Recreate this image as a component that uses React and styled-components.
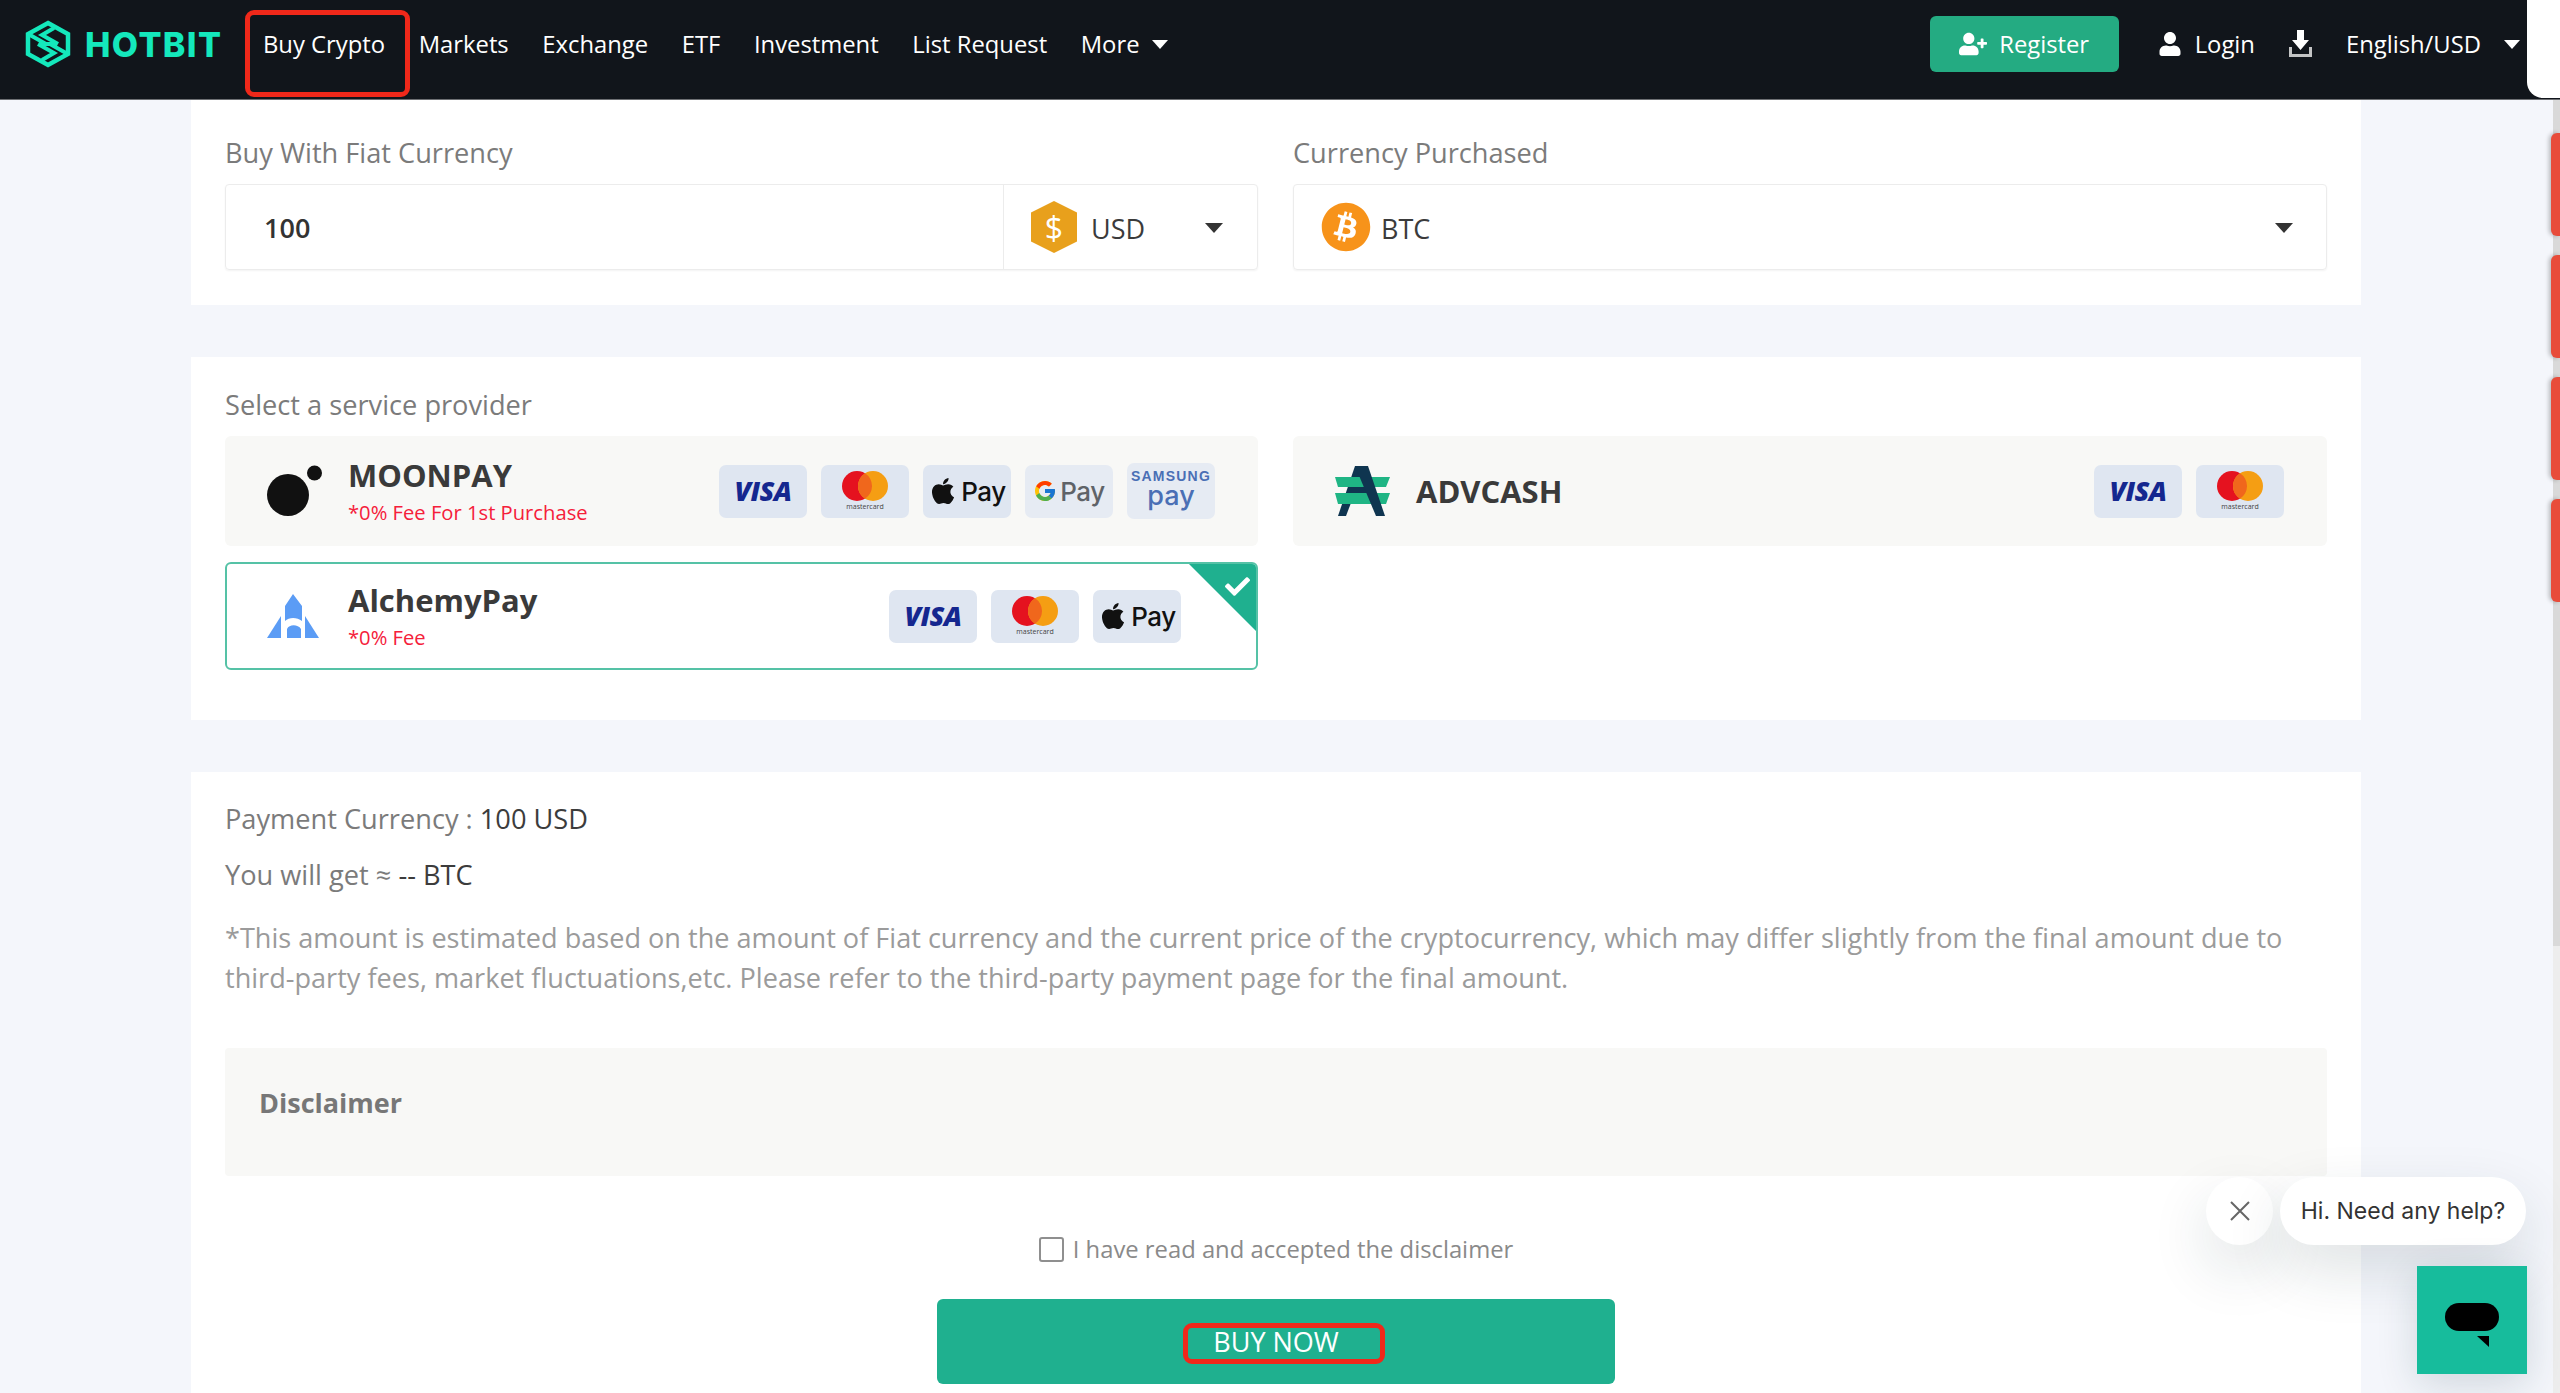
import React from 'react'
import styled, { createGlobalStyle } from 'styled-components'
import { FaApple, FaUser, FaUserPlus, FaCheck, FaBitcoin } from 'react-icons/fa'
import { FcGoogle } from 'react-icons/fc'

const GlobalStyle = createGlobalStyle`
  html, body { margin: 0; padding: 0; height: 100%; overflow: hidden; }
  body { background: #f4f6fb; font-family: "Open Sans", "Liberation Sans", sans-serif; }
  * { box-sizing: border-box; }
`

const Screen = styled.div`
  height: 100vh;
  display: flex;
  flex-direction: column;
  overflow: hidden;
  position: relative;
`

const Header = styled.header`
  height: 100px;
  flex-shrink: 0;
  background: #11151b;
  border-bottom: 1px solid #6d6f73;
  display: flex;
  align-items: center;
  padding: 0 40px 11px 24px;
  color: #fff;
  font-size: 23.8px;
`

const Logo = styled.div`
  display: flex;
  align-items: center;
  gap: 13px;
  width: 239px;
  color: #14e8bc;
  font-family: "Inter", "Liberation Sans", sans-serif;
  font-weight: 800;
  font-size: 34px;
  letter-spacing: 1.4px;
`

const Nav = styled.nav`
  display: flex;
  align-items: center;
  gap: 33.6px;
`

const NavItem = styled.span`
  position: relative;
  display: inline-flex;
  align-items: center;
  gap: 12px;
  white-space: nowrap;
`

const Annotation = styled.i`
  position: absolute;
  border: 5px solid #f0281a;
  border-radius: 9px;
  pointer-events: none;
`

const NavAnnotation = styled(Annotation)`
  left: -18px;
  right: -25px;
  top: -18px;
  bottom: -37px;
`

const Caret = styled.i`
  display: inline-block;
  width: 0;
  height: 0;
  border-left: ${(p) => p.$size || 8}px solid transparent;
  border-right: ${(p) => p.$size || 8}px solid transparent;
  border-top: ${(p) => (p.$size || 8) + 1}px solid ${(p) => p.$color || '#fff'};
`

const HeaderRight = styled.div`
  margin-left: auto;
  display: flex;
  align-items: center;
`

const RegisterButton = styled.div`
  width: 189px;
  height: 56px;
  border-radius: 6px;
  background: #24ab82;
  display: flex;
  align-items: center;
  justify-content: center;
  gap: 12px;
  margin-right: 39px;
  svg { font-size: 28px; }
`

const HeaderLink = styled.span`
  display: inline-flex;
  align-items: center;
  gap: ${(p) => p.$gap || 13}px;
  white-space: nowrap;
  margin-right: ${(p) => p.$mr || 0}px;
  svg { font-size: 24px; }
`

const CornerTab = styled.div`
  position: absolute;
  top: 0;
  right: 0;
  width: 33px;
  height: 98px;
  background: #fff;
  border-bottom-left-radius: 16px;
`

const Body = styled.div`
  flex: 1;
  min-height: 0;
  display: flex;
`

const Content = styled.main`
  flex: 1;
  min-width: 0;
  padding: 0 192px 0 191px;
  display: flex;
  flex-direction: column;
  gap: 52px;
`

const ScrollTrack = styled.div`
  width: 7px;
  flex-shrink: 0;
  background: #ededed;
`

const ScrollThumb = styled.div`
  height: 846px;
  background: #d9d9d9;
`

const SideTabs = styled.div`
  position: absolute;
  right: 0;
  top: 133px;
  display: flex;
  flex-direction: column;
  gap: 19px;
`

const SideTab = styled.div`
  width: 9px;
  height: 103px;
  background: #e84c3a;
  border-radius: 6px 0 0 6px;
  box-shadow: -2px 0 4px rgba(0, 0, 0, 0.25);
`

const Panel = styled.section`
  background: #fff;
  flex-shrink: 0;
  padding: ${(p) => p.$pad};
`

const TwoColumns = styled.div`
  display: grid;
  grid-template-columns: 1033px 1034px;
  column-gap: 35px;
  align-items: start;
`

const Label = styled.div`
  font-size: 27.2px;
  line-height: 36px;
  color: #7b7b7b;
  margin-bottom: 13px;
`

const Field = styled.div`
  height: 86px;
  border: 1px solid #ececec;
  border-radius: 4px;
  box-shadow: 0 1px 2px rgba(0, 0, 0, 0.05);
  display: flex;
  align-items: center;
`

const AmountValue = styled.div`
  flex: 1;
  align-self: stretch;
  display: flex;
  align-items: center;
  padding-left: 38px;
  font-size: 27px;
  font-weight: 600;
  color: #333;
  border-right: 1px solid #ececec;
`

const CoinSelect = styled.div`
  width: ${(p) => (p.$wide ? '100%' : '253px')};
  display: flex;
  align-items: center;
  padding: 0 ${(p) => (p.$wide ? 33 : 34)}px 0 27px;
  gap: ${(p) => (p.$wide ? 10 : 14)}px;
  font-size: 27px;
  color: #3b3b3b;
  span { margin-top: 3px; }
  i { margin-left: auto; margin-top: 2px; }
`

const DollarCoin = styled.div`
  width: 46px;
  height: 52px;
  clip-path: polygon(50% 0, 100% 22%, 100% 78%, 50% 100%, 0 78%, 0 22%);
  background: #e8a01c;
  color: #fff;
  display: flex;
  align-items: center;
  justify-content: center;
  font-size: 32px;
`

const BitcoinCoin = styled.div`
  height: 50px;
  color: #f7931a;
  svg { display: block; font-size: 50px; }
`

const CardStack = styled.div`
  display: flex;
  flex-direction: column;
  gap: 16px;
`

const ProviderCard = styled.div`
  position: relative;
  height: ${(p) => (p.$selected ? 108 : 110)}px;
  border-radius: 6px;
  overflow: hidden;
  background: ${(p) => (p.$selected ? '#fff' : '#f8f8f6')};
  border: ${(p) => (p.$selected ? '2px solid #55c2a6' : 'none')};
  padding: 0 ${(p) => (p.$selected ? 75 : 43)}px 0 ${(p) => (p.$selected ? 40 : 42)}px;
  display: flex;
  align-items: center;
`

const IconSlot = styled.div`
  width: 81px;
  flex-shrink: 0;
  svg { display: block; }
`

const ProviderInfo = styled.div`
  display: flex;
  flex-direction: column;
  margin-top: -1px;
`

const ProviderName = styled.div`
  font-size: ${(p) => p.$size || 31}px;
  line-height: 40px;
  font-weight: 700;
  color: #3a3a3a;
`

const FeeNote = styled.div`
  font-size: 20.2px;
  line-height: 30px;
  color: #f5203a;
  margin-top: 2px;
`

const Chips = styled.div`
  margin-left: auto;
  display: flex;
  align-items: center;
  gap: 14px;
`

const Chip = styled.div`
  width: 88px;
  height: ${(p) => (p.$tall ? 56 : 53)}px;
  border-radius: 7px;
  background: ${(p) => (p.$light ? '#e6ebf3' : '#dfe6f1')};
  display: flex;
  flex-direction: column;
  align-items: center;
  justify-content: center;
`

const VisaText = styled.span`
  font-family: "Open Sans", sans-serif;
  font-style: italic;
  font-weight: 800;
  font-size: 27px;
  line-height: 34px;
  letter-spacing: -0.5px;
  color: #15278f;
`

const MasterLabel = styled.span`
  font-size: 7px;
  line-height: 8px;
  color: #444;
  margin-top: 2px;
`

const PayRow = styled.div`
  display: flex;
  align-items: center;
  gap: 3px;
  font-family: "Inter", "Liberation Sans", sans-serif;
  font-size: 26px;
  font-weight: 500;
  letter-spacing: -0.5px;
  color: ${(p) => p.$color || '#111'};
`

const SamsungWord = styled.span`
  font-family: "Liberation Sans", sans-serif;
  font-weight: 700;
  font-size: 14px;
  line-height: 15px;
  letter-spacing: 1.2px;
  color: #4a6fb5;
`

const SamsungPay = styled.span`
  font-family: "Inter", sans-serif;
  font-size: 27px;
  line-height: 24px;
  font-weight: 500;
  color: #4a6fb5;
  margin-bottom: 5px;
`

const CornerMark = styled.div`
  position: absolute;
  top: -2px;
  right: -2px;
  width: 71px;
  height: 71px;
  background: #1fb08f;
  clip-path: polygon(0 0, 100% 0, 100% 100%);
  color: #fff;
  svg { position: absolute; top: 12px; right: 8px; font-size: 25px; }
`

const SummaryLine = styled.div`
  font-size: 27.2px;
  line-height: 36px;
  color: #7b7b7b;
  margin-bottom: 20px;
  b { font-weight: 500; color: #3c3c3c; }
`

const Note = styled.p`
  margin: 25px 0 0;
  font-size: 27.1px;
  line-height: 40px;
  color: #9b9b9b;
`

const DisclaimerBox = styled.div`
  margin-top: 50px;
  height: 128px;
  background: #f8f8f6;
  border-radius: 4px;
  padding: 37px 34px 0;
  font-size: 27px;
  line-height: 36px;
  font-weight: 700;
  color: #777;
`

const AcceptRow = styled.label`
  margin-top: 55px;
  display: flex;
  justify-content: center;
  align-items: center;
  gap: 9px;
  font-size: 23.8px;
  line-height: 36px;
  color: #8a8a8a;
`

const CheckBox = styled.span`
  width: 25px;
  height: 25px;
  border: 2px solid #8f8f8f;
  border-radius: 3px;
  background: #fff;
`

const BuyButton = styled.div`
  margin: 32px auto 60px;
  width: 678px;
  height: 85px;
  border-radius: 6px;
  background: #1fb08f;
  color: #fff;
  display: flex;
  align-items: center;
  justify-content: center;
  font-size: 27px;
`

const BuyLabel = styled.span`
  position: relative;
`

const BuyAnnotation = styled(Annotation)`
  left: -30px;
  right: -46px;
  top: 0;
  bottom: -4px;
`

const HelpRow = styled.div`
  position: absolute;
  top: 1177px;
  right: 34px;
  display: flex;
  gap: 7px;
  font-family: "Inter", "Liberation Sans", sans-serif;
  font-size: 23px;
  color: #333;
`

const CloseBubble = styled.div`
  width: 67px;
  height: 68px;
  border-radius: 50%;
  background: #fff;
  display: flex;
  align-items: center;
  justify-content: center;
  box-shadow: 0 24px 60px rgba(20, 50, 60, 0.14);
`

const HelpBubble = styled.div`
  width: 246px;
  height: 68px;
  border-radius: 34px;
  background: #fff;
  display: flex;
  align-items: center;
  justify-content: center;
  white-space: nowrap;
  box-shadow: 0 24px 60px rgba(20, 50, 60, 0.14);
`

const ChatButton = styled.div`
  position: absolute;
  left: 2417px;
  top: 1266px;
  width: 110px;
  height: 108px;
  padding-top: 12px;
  background: #17bc9c;
  box-shadow: 0 10px 40px rgba(20, 50, 60, 0.16);
  display: flex;
  align-items: center;
  justify-content: center;
`

const HotbitMark = () => (
  <svg width="48" height="48" viewBox="0 0 48 48" fill="none" stroke="#14e8bc" strokeWidth="4.5">
    <path d="M24 3 L44 14 V34 L24 45 L4 34 V14 Z" />
    <path d="M6 15 L22 24 H30 M42 33 L26 24 H18 M30 8 L18 15 L34 24 M18 40 L30 33 L14 24" strokeWidth="4" />
  </svg>
)

const DownloadIcon = () => (
  <svg width="25" height="30" viewBox="0 0 25 30" fill="#fff">
    <path d="M9 1 H16 V11 H21 L12.5 21 L4 11 H9 Z" />
    <path d="M1 18 H4 V25 H21 V18 H24 V28 H1 Z" opacity="0.75" />
  </svg>
)

const MoonpayIcon = () => (
  <svg width="56" height="52" viewBox="0 0 56 52" fill="#111">
    <circle cx="21" cy="30" r="21" />
    <circle cx="47.5" cy="8" r="7.5" />
  </svg>
)

const AlchemyIcon = () => (
  <svg width="52" height="45" viewBox="0 0 52 45" fill="#5b9cf5">
    <path d="M26 0 L35 12 V27 C30 23 22 23 18 27 V12 Z" />
    <path d="M20 44 V35 C22 30 31 30 34 35 V44 Z" />
    <path d="M14 22 L0 44 H14 Z" />
    <path d="M38 22 L52 44 H38 Z" />
  </svg>
)

const AdvcashIcon = () => (
  <svg width="56" height="52" viewBox="0 0 56 52">
    <path d="M20 1 H30 L11 51 H3 Z" fill="#0f3550" />
    <path d="M14 22 H36 V28 H12 Z" fill="#0f3550" />
    <path d="M0 12 H55 L51 22 H3 Z" fill="#1fb584" />
    <path d="M0 28 H55 L51 39 H3 Z" fill="#1fb584" />
    <path d="M20 1 H33 L50 51 H41 Z" fill="#0f3550" />
  </svg>
)

const ChatIcon = () => (
  <svg width="56" height="46" viewBox="0 0 56 46" fill="#000">
    <rect x="1" y="0" width="54" height="28" rx="14" />
    <path d="M33 33 H45 V44 Z" />
  </svg>
)

const CloseIcon = () => (
  <svg width="22" height="22" viewBox="0 0 22 22" stroke="#666" strokeWidth="2" fill="none">
    <path d="M2 2 L20 20 M20 2 L2 20" />
  </svg>
)

const MasterCircles = () => (
  <svg width="46" height="30" viewBox="0 0 46 30">
    <circle cx="15" cy="15" r="15" fill="#e5121f" />
    <circle cx="31" cy="15" r="15" fill="#f59e13" />
    <path d="M23 2.3 a15 15 0 0 1 0 25.4 a15 15 0 0 1 0 -25.4" fill="#f0671c" />
  </svg>
)

const chipFor = {
  visa: (
    <Chip key="visa">
      <VisaText>VISA</VisaText>
    </Chip>
  ),
  master: (
    <Chip key="master">
      <MasterCircles />
      <MasterLabel>mastercard</MasterLabel>
    </Chip>
  ),
  apple: (
    <Chip key="apple">
      <PayRow>
        <FaApple size={30} />
        Pay
      </PayRow>
    </Chip>
  ),
  google: (
    <Chip key="google" $light>
      <PayRow $color="#5f6368">
        <FcGoogle size={24} />
        Pay
      </PayRow>
    </Chip>
  ),
  samsung: (
    <Chip key="samsung" $light $tall>
      <SamsungWord>SAMSUNG</SamsungWord>
      <SamsungPay>pay</SamsungPay>
    </Chip>
  ),
}

const PayChips = ({ list }) => <Chips>{list.map((name) => chipFor[name])}</Chips>

const navLinks = ['Markets', 'Exchange', 'ETF', 'Investment', 'List Request']

export default function App() {
  return (
    <Screen>
      <GlobalStyle />
      <Header>
        <Logo>
          <HotbitMark />
          HOTBIT
        </Logo>
        <Nav>
          <NavItem>
            Buy Crypto
            <NavAnnotation />
          </NavItem>
          {navLinks.map((link) => (
            <NavItem key={link}>{link}</NavItem>
          ))}
          <NavItem>
            More <Caret />
          </NavItem>
        </Nav>
        <HeaderRight>
          <RegisterButton>
            <FaUserPlus />
            Register
          </RegisterButton>
          <HeaderLink $mr={33}>
            <FaUser />
            Login
          </HeaderLink>
          <HeaderLink $mr={33}>
            <DownloadIcon />
          </HeaderLink>
          <HeaderLink $gap={23}>
            English/USD <Caret />
          </HeaderLink>
        </HeaderRight>
      </Header>
      <CornerTab />

      <Body>
        <Content>
          <Panel $pad="35px 34px">
            <TwoColumns>
              <div>
                <Label>Buy With Fiat Currency</Label>
                <Field>
                  <AmountValue>100</AmountValue>
                  <CoinSelect>
                    <DollarCoin>$</DollarCoin>
                    <span>USD</span>
                    <Caret $size={9} $color="#333" />
                  </CoinSelect>
                </Field>
              </div>
              <div>
                <Label>Currency Purchased</Label>
                <Field>
                  <CoinSelect $wide>
                    <BitcoinCoin>
                      <FaBitcoin />
                    </BitcoinCoin>
                    <span>BTC</span>
                    <Caret $size={9} $color="#333" />
                  </CoinSelect>
                </Field>
              </div>
            </TwoColumns>
          </Panel>

          <Panel $pad="30px 34px 50px">
            <Label>Select a service provider</Label>
            <TwoColumns>
              <CardStack>
                <ProviderCard>
                  <IconSlot>
                    <MoonpayIcon />
                  </IconSlot>
                  <ProviderInfo>
                    <ProviderName>MOONPAY</ProviderName>
                    <FeeNote>*0% Fee For 1st Purchase</FeeNote>
                  </ProviderInfo>
                  <PayChips list={['visa', 'master', 'apple', 'google', 'samsung']} />
                </ProviderCard>
                <ProviderCard $selected>
                  <IconSlot>
                    <AlchemyIcon />
                  </IconSlot>
                  <ProviderInfo>
                    <ProviderName>AlchemyPay</ProviderName>
                    <FeeNote>*0% Fee</FeeNote>
                  </ProviderInfo>
                  <PayChips list={['visa', 'master', 'apple']} />
                  <CornerMark>
                    <FaCheck />
                  </CornerMark>
                </ProviderCard>
              </CardStack>
              <ProviderCard>
                <IconSlot>
                  <AdvcashIcon />
                </IconSlot>
                <ProviderName>ADVCASH</ProviderName>
                <PayChips list={['visa', 'master']} />
              </ProviderCard>
            </TwoColumns>
          </Panel>

          <Panel $pad="29px 34px 0">
            <SummaryLine>
              Payment Currency : <b>100 USD</b>
            </SummaryLine>
            <SummaryLine>
              You will get ≈ <b>-- BTC</b>
            </SummaryLine>
            <Note>
              *This amount is estimated based on the amount of Fiat currency and the current price of the
              cryptocurrency, which may differ slightly from the final amount due to third-party fees, market
              fluctuations,etc. Please refer to the third-party payment page for the final amount.
            </Note>
            <DisclaimerBox>Disclaimer</DisclaimerBox>
            <AcceptRow>
              <CheckBox />I have read and accepted the disclaimer
            </AcceptRow>
            <BuyButton>
              <BuyLabel>
                BUY NOW
                <BuyAnnotation />
              </BuyLabel>
            </BuyButton>
          </Panel>
        </Content>
        <ScrollTrack>
          <ScrollThumb />
        </ScrollTrack>
      </Body>

      <SideTabs>
        <SideTab />
        <SideTab />
        <SideTab />
        <SideTab />
      </SideTabs>

      <HelpRow>
        <CloseBubble>
          <CloseIcon />
        </CloseBubble>
        <HelpBubble>Hi. Need any help?</HelpBubble>
      </HelpRow>
      <ChatButton>
        <ChatIcon />
      </ChatButton>
    </Screen>
  )
}
